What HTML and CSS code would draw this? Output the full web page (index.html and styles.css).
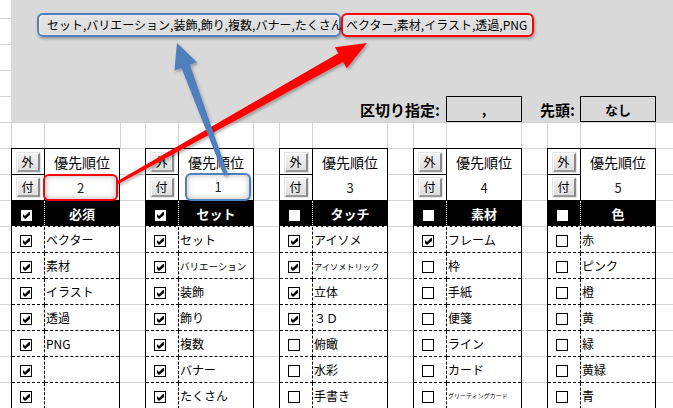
FILE: index.html
```html
<!DOCTYPE html>
<html lang="ja">
<head>
<meta charset="utf-8">
<title>キーワード設定</title>
<link rel="stylesheet" href="styles.css">
</head>
<body>
<div class="sheet">
  <div class="banner">
    <div class="tags">
      <div class="tag blue">セット,バリエーション,装飾,飾り,複数,バナー,たくさん</div>
      <div class="tag red">ベクター,素材,イラスト,透過,PNG</div>
    </div>
    <div class="settings">
      <span class="lbl">区切り指定:</span>
      <span class="box">,</span>
      <span class="lbl lbl2">先頭:</span>
      <span class="box">なし</span>
    </div>
  </div>

  <div class="gridrow">
    <span class="gc w33"></span><span class="gc w76"></span><span class="gc w25"></span>
    <span class="gc w33"></span><span class="gc w75"></span><span class="gc w26"></span>
    <span class="gc w33"></span><span class="gc w75"></span><span class="gc w26"></span>
    <span class="gc w33"></span><span class="gc w75"></span><span class="gc w26"></span>
    <span class="gc w33"></span><span class="gc w75"></span><span class="gc rest"></span>
  </div>

  <div class="tables">
    <!-- table 1 -->
    <div class="tbl">
      <div class="a btncell"><span class="btn">外</span></div><div class="b title">優先順位</div>
      <div class="a btncell low"><span class="btn">付</span></div><div class="b prio left"><span class="mark red">2</span></div>
      <div class="a hd"><span class="hcb"><svg class="ck" viewBox="0 0 7 7"><polygon points="0,2 2,4 6,0 7,0 7,3 2,7 0,5"/></svg></span></div><div class="b hd">必須</div>
      <div class="a row"><span class="cb"><svg class="ck" viewBox="0 0 7 7"><polygon points="0,2 2,4 6,0 7,0 7,3 2,7 0,5"/></svg></span></div><div class="b row">ベクター</div>
      <div class="a row"><span class="cb"><svg class="ck" viewBox="0 0 7 7"><polygon points="0,2 2,4 6,0 7,0 7,3 2,7 0,5"/></svg></span></div><div class="b row">素材</div>
      <div class="a row"><span class="cb"><svg class="ck" viewBox="0 0 7 7"><polygon points="0,2 2,4 6,0 7,0 7,3 2,7 0,5"/></svg></span></div><div class="b row">イラスト</div>
      <div class="a row"><span class="cb"><svg class="ck" viewBox="0 0 7 7"><polygon points="0,2 2,4 6,0 7,0 7,3 2,7 0,5"/></svg></span></div><div class="b row">透過</div>
      <div class="a row"><span class="cb"><svg class="ck" viewBox="0 0 7 7"><polygon points="0,2 2,4 6,0 7,0 7,3 2,7 0,5"/></svg></span></div><div class="b row">PNG</div>
      <div class="a row"><span class="cb"><svg class="ck" viewBox="0 0 7 7"><polygon points="0,2 2,4 6,0 7,0 7,3 2,7 0,5"/></svg></span></div><div class="b row"></div>
      <div class="a row"><span class="cb"><svg class="ck" viewBox="0 0 7 7"><polygon points="0,2 2,4 6,0 7,0 7,3 2,7 0,5"/></svg></span></div><div class="b row"></div>
      <div class="a row"><span class="cb"><svg class="ck" viewBox="0 0 7 7"><polygon points="0,2 2,4 6,0 7,0 7,3 2,7 0,5"/></svg></span></div><div class="b row"></div>
    </div>

    <!-- table 2 -->
    <div class="tbl">
      <div class="a btncell"><span class="btn">外</span></div><div class="b title">優先順位</div>
      <div class="a btncell low"><span class="btn">付</span></div><div class="b prio left"><span class="mark blue">1</span></div>
      <div class="a hd"><span class="hcb"><svg class="ck" viewBox="0 0 7 7"><polygon points="0,2 2,4 6,0 7,0 7,3 2,7 0,5"/></svg></span></div><div class="b hd">セット</div>
      <div class="a row"><span class="cb"><svg class="ck" viewBox="0 0 7 7"><polygon points="0,2 2,4 6,0 7,0 7,3 2,7 0,5"/></svg></span></div><div class="b row">セット</div>
      <div class="a row"><span class="cb"><svg class="ck" viewBox="0 0 7 7"><polygon points="0,2 2,4 6,0 7,0 7,3 2,7 0,5"/></svg></span></div><div class="b row fit">バリエーション</div>
      <div class="a row"><span class="cb"><svg class="ck" viewBox="0 0 7 7"><polygon points="0,2 2,4 6,0 7,0 7,3 2,7 0,5"/></svg></span></div><div class="b row">装飾</div>
      <div class="a row"><span class="cb"><svg class="ck" viewBox="0 0 7 7"><polygon points="0,2 2,4 6,0 7,0 7,3 2,7 0,5"/></svg></span></div><div class="b row">飾り</div>
      <div class="a row"><span class="cb"><svg class="ck" viewBox="0 0 7 7"><polygon points="0,2 2,4 6,0 7,0 7,3 2,7 0,5"/></svg></span></div><div class="b row">複数</div>
      <div class="a row"><span class="cb"><svg class="ck" viewBox="0 0 7 7"><polygon points="0,2 2,4 6,0 7,0 7,3 2,7 0,5"/></svg></span></div><div class="b row">バナー</div>
      <div class="a row"><span class="cb"><svg class="ck" viewBox="0 0 7 7"><polygon points="0,2 2,4 6,0 7,0 7,3 2,7 0,5"/></svg></span></div><div class="b row">たくさん</div>
      <div class="a row"><span class="cb"><svg class="ck" viewBox="0 0 7 7"><polygon points="0,2 2,4 6,0 7,0 7,3 2,7 0,5"/></svg></span></div><div class="b row"></div>
    </div>

    <!-- table 3 -->
    <div class="tbl">
      <div class="a btncell"><span class="btn">外</span></div><div class="b title">優先順位</div>
      <div class="a btncell low"><span class="btn">付</span></div><div class="b prio">3</div>
      <div class="a hd"><span class="hcb"></span></div><div class="b hd">タッチ</div>
      <div class="a row"><span class="cb"><svg class="ck" viewBox="0 0 7 7"><polygon points="0,2 2,4 6,0 7,0 7,3 2,7 0,5"/></svg></span></div><div class="b row">アイソメ</div>
      <div class="a row"><span class="cb"><svg class="ck" viewBox="0 0 7 7"><polygon points="0,2 2,4 6,0 7,0 7,3 2,7 0,5"/></svg></span></div><div class="b row fit2">アイソメトリック</div>
      <div class="a row"><span class="cb"><svg class="ck" viewBox="0 0 7 7"><polygon points="0,2 2,4 6,0 7,0 7,3 2,7 0,5"/></svg></span></div><div class="b row">立体</div>
      <div class="a row"><span class="cb"><svg class="ck" viewBox="0 0 7 7"><polygon points="0,2 2,4 6,0 7,0 7,3 2,7 0,5"/></svg></span></div><div class="b row">３Ｄ</div>
      <div class="a row"><span class="cb"></span></div><div class="b row">俯瞰</div>
      <div class="a row"><span class="cb"></span></div><div class="b row">水彩</div>
      <div class="a row"><span class="cb"></span></div><div class="b row">手書き</div>
      <div class="a row"><span class="cb"></span></div><div class="b row"></div>
    </div>

    <!-- table 4 -->
    <div class="tbl">
      <div class="a btncell"><span class="btn">外</span></div><div class="b title">優先順位</div>
      <div class="a btncell low"><span class="btn">付</span></div><div class="b prio">4</div>
      <div class="a hd"><span class="hcb"></span></div><div class="b hd">素材</div>
      <div class="a row"><span class="cb"><svg class="ck" viewBox="0 0 7 7"><polygon points="0,2 2,4 6,0 7,0 7,3 2,7 0,5"/></svg></span></div><div class="b row">フレーム</div>
      <div class="a row"><span class="cb"></span></div><div class="b row">枠</div>
      <div class="a row"><span class="cb"></span></div><div class="b row">手紙</div>
      <div class="a row"><span class="cb"></span></div><div class="b row">便箋</div>
      <div class="a row"><span class="cb"></span></div><div class="b row">ライン</div>
      <div class="a row"><span class="cb"></span></div><div class="b row">カード</div>
      <div class="a row"><span class="cb"></span></div><div class="b row tiny">グリーティングカード</div>
      <div class="a row"><span class="cb"></span></div><div class="b row"></div>
    </div>

    <!-- table 5 -->
    <div class="tbl">
      <div class="a btncell"><span class="btn">外</span></div><div class="b title">優先順位</div>
      <div class="a btncell low"><span class="btn">付</span></div><div class="b prio">5</div>
      <div class="a hd"><span class="hcb"></span></div><div class="b hd">色</div>
      <div class="a row"><span class="cb"></span></div><div class="b row">赤</div>
      <div class="a row"><span class="cb"></span></div><div class="b row">ピンク</div>
      <div class="a row"><span class="cb"></span></div><div class="b row">橙</div>
      <div class="a row"><span class="cb"></span></div><div class="b row">黄</div>
      <div class="a row"><span class="cb"></span></div><div class="b row">緑</div>
      <div class="a row"><span class="cb"></span></div><div class="b row">黄緑</div>
      <div class="a row"><span class="cb"></span></div><div class="b row">青</div>
      <div class="a row"><span class="cb"></span></div><div class="b row"></div>
    </div>
  </div>

  <svg class="arrows" viewBox="0 0 673 408" width="673" height="408">
    <defs>
      <filter id="sh" x="-20%" y="-20%" width="140%" height="140%">
        <feDropShadow dx="1.5" dy="2" stdDeviation="1.5" flood-color="#000" flood-opacity="0.3"/>
      </filter>
    </defs>
    <polygon class="red-arrow" filter="url(#sh)" points="116.3,181.7 338.4,53.3 334.9,47.2 367,43 346.7,68.2 343.2,62.1 117.7,184.3"/>
    <polygon class="blue-arrow" filter="url(#sh)" points="224.1,175.7 181.5,68.0 174.45,70.6 177,43 196.95,62.2 189.9,64.8 227.9,174.3"/>
  </svg>
</div>
</body>
</html>
```

FILE: styles.css
```css
* { box-sizing: border-box; margin: 0; padding: 0; }

html, body {
  width: 673px;
  height: 408px;
  overflow: hidden;
  background: #fff;
}

body {
  font-family: "Noto Sans CJK JP", "Liberation Sans", sans-serif;
  font-size: 12px;
  color: #000;
}

.sheet {
  position: relative;
  width: 673px;
  height: 408px;
  overflow: hidden;
  background-image: linear-gradient(to bottom, transparent 25px, #d4d4d4 25px);
  background-size: 100% 26px;
  background-position: 0 -7px;
}

/* gray banner area */
.banner {
  margin-left: 11px;
  height: 122px;
  background: #d9d9d9;
  display: flex;
  flex-direction: column;
  justify-content: space-between;
}

.tags {
  display: flex;
  padding: 13px 0 0 26px;
}

.tag {
  height: 24px;
  border: 2px solid;
  border-radius: 6px;
  display: flex;
  align-items: center;
  white-space: nowrap;
  font-size: 12px;
  line-height: 1;
  background: linear-gradient(#e4e4e4, #dcdcdc);
  box-shadow: 1px 2px 3px rgba(0, 0, 0, 0.3), inset 0 0 3px rgba(255, 255, 255, 0.7);
}

.tag.blue {
  width: 304px;
  padding-left: 8px;
  border-color: #4f81bd;
}

.tag.red {
  width: 193px;
  padding-left: 3px;
  border-color: #ff0000;
}

.settings {
  display: flex;
  justify-content: flex-end;
  align-items: center;
  height: 26px;
  padding-right: 17px;
}

.lbl {
  font-size: 15px;
  font-weight: bold;
  margin-right: 6px;
  white-space: nowrap;
}

.lbl2 {
  width: 58px;
  margin-right: 0;
  padding-right: 5px;
  text-align: right;
}

.box {
  width: 76px;
  height: 26px;
  border: 1px solid #000;
  display: flex;
  align-items: center;
  justify-content: center;
  font-weight: bold;
  font-size: 13px;
}

/* empty spreadsheet row above tables */
.gridrow {
  display: flex;
  margin-left: 11px;
  height: 26px;
}

.gc {
  height: 26px;
  border-left: 1px solid #d4d4d4;
  flex: none;
}

.w25 { width: 25px; }
.w26 { width: 26px; }
.w33 { width: 33px; }
.w75 { width: 75px; }
.w76 { width: 76px; }
.rest { flex: 1; }

/* tables */
.tables {
  display: flex;
  gap: 25px;
  margin-left: 11px;
  align-items: flex-start;
}

.tbl {
  display: grid;
  grid-template-columns: 33px 74px;
  grid-auto-rows: 26px;
  border: 1px solid #000;
  background: #fff;
  flex: none;
}

.a {
  display: flex;
  align-items: center;
  border-right: 1px solid #000;
  border-bottom: 1px solid #000;
}

.b {
  display: flex;
  align-items: center;
  border-bottom: 1px solid transparent;
  white-space: nowrap;
  overflow: visible;
}

.btncell {
  justify-content: center;
  padding-top: 1px;
}

.btncell.low {
  padding-top: 0;
}

.btn {
  width: 23px;
  height: 19px;
  display: flex;
  align-items: center;
  justify-content: center;
  font-size: 12px;
  line-height: 1;
  background: linear-gradient(#f2f2f2, #dedede);
  border-top: 1px solid #ffffff;
  border-left: 1px solid #ffffff;
  border-right: 2px solid #8a8a8a;
  border-bottom: 2px solid #9a9a9a;
  box-shadow: 0 0 0 0.5px #c8c8c8;
}

.title {
  justify-content: center;
  font-size: 14px;
}

.prio {
  justify-content: center;
  font-size: 13px;
  color: #222;
  border-bottom: 1px solid #000;
}

.prio.left {
  justify-content: flex-start;
}

.mark {
  display: flex;
  align-items: center;
  justify-content: center;
  border: 2px solid;
  border-radius: 6px;
  background: #ffffff;
  box-shadow: inset 0 0 6px rgba(0, 0, 0, 0.28), 1px 1px 2px rgba(0, 0, 0, 0.2);
  font-size: 13px;
}

.mark.red {
  border-color: #ff0000;
  width: 75px;
  height: 27px;
  margin-left: -2px;
}

.mark.blue {
  border-color: #4f81bd;
  width: 66px;
  height: 28px;
  margin-left: 6px;
  margin-top: -2px;
}

/* header row */
.hd {
  background: #000;
  color: #fff;
  font-weight: bold;
  font-size: 13px;
  border-bottom: 1px dashed #fff;
}

.a.hd {
  border-right: 1px dotted #fff;
  padding-left: 9px;
  padding-top: 3px;
}

.b.hd {
  justify-content: center;
}

.hcb {
  width: 11px;
  height: 11px;
  background: #fff;
  display: flex;
  align-items: center;
  justify-content: center;
}

/* data rows */
.a.row {
  border-right: 1px dashed #000;
  border-bottom: 1px dashed #000;
  padding-left: 8px;
  padding-top: 3px;
}

.b.row {
  border-bottom: 1px dashed #000;
  padding-left: 1px;
  font-size: 12px;
}

.b.row.fit {
  font-size: 9.5px;
}

.b.row.fit2 {
  font-size: 8.2px;
}

.b.row.tiny {
  font-size: 6px;
}

.cb {
  width: 12px;
  height: 12px;
  border: 1px solid #000;
  background: #fff;
  display: flex;
  align-items: center;
  justify-content: center;
}

.ck {
  width: 7px;
  height: 7px;
  fill: #000;
  display: block;
}

/* annotation arrows */
.arrows {
  position: absolute;
  left: 0;
  top: 0;
  pointer-events: none;
}

.red-arrow {
  fill: #ff0000;
}

.blue-arrow {
  fill: #4f7fbc;
}
```
